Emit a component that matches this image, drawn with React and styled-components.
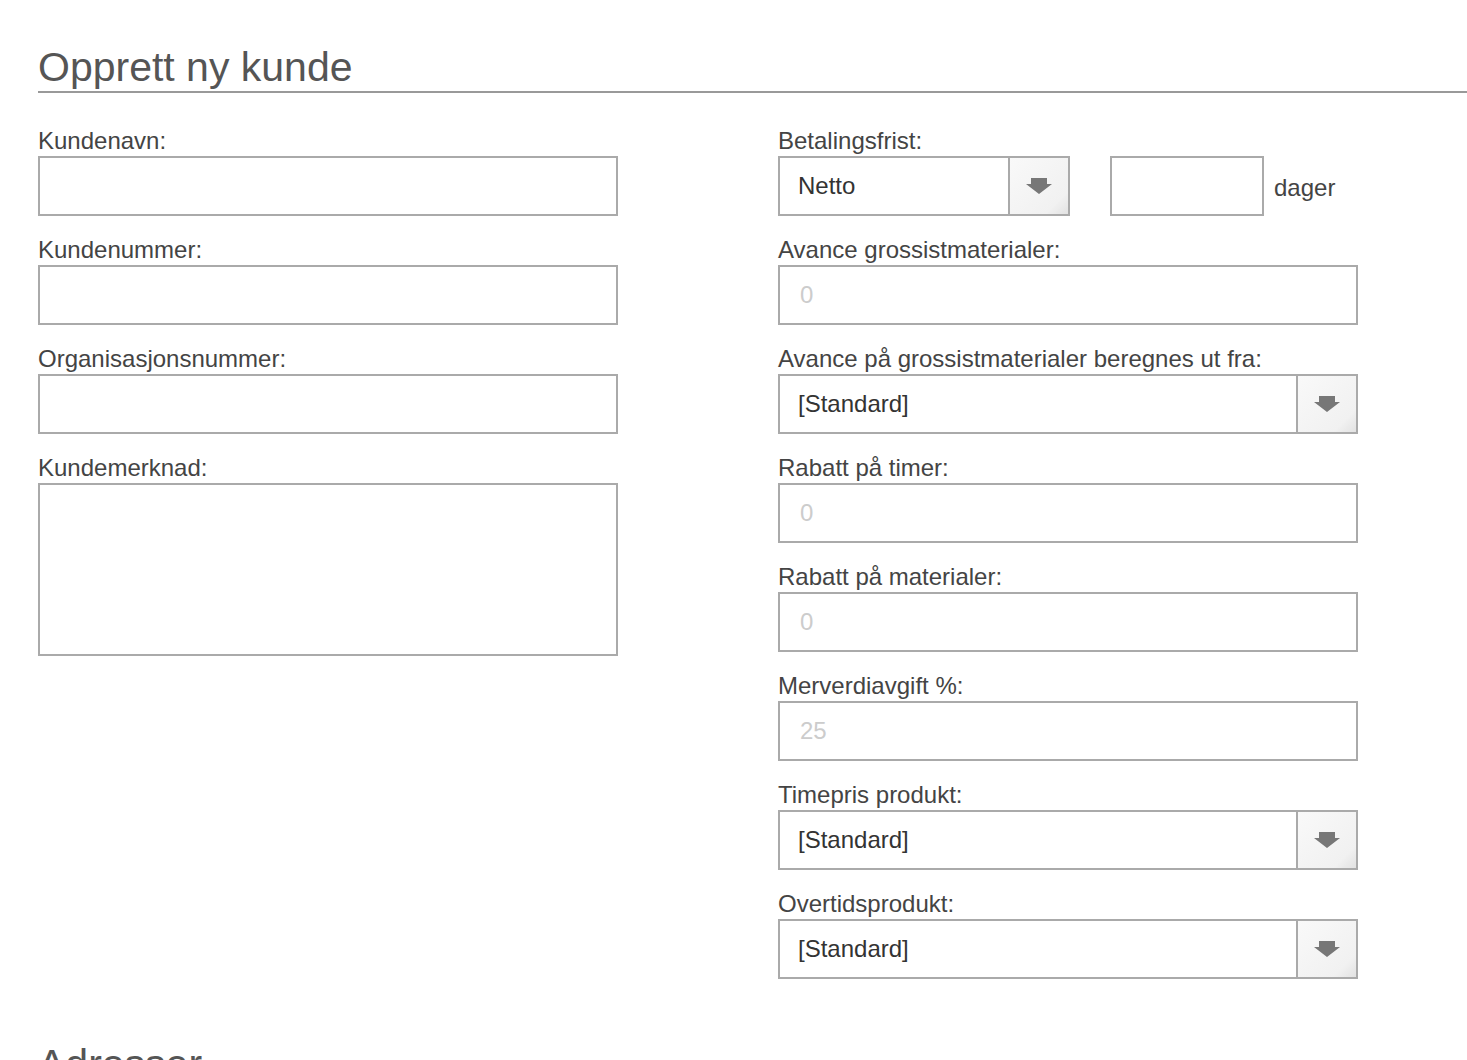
import React from "react";
import styled, { createGlobalStyle } from "styled-components";

const GlobalStyle = createGlobalStyle`
  html, body {
    margin: 0;
    padding: 0;
    background: #fff;
  }
  body {
    font-family: "Liberation Sans", Arial, sans-serif;
    color: #444;
  }
  * {
    box-sizing: border-box;
  }
`;

const Page = styled.div`
  padding: 44px 0 0 38px;
  height: 1060px;
  overflow: hidden;
`;

const Title = styled.h1`
  margin: 0;
  font-size: 41px;
  line-height: 47px;
  font-weight: 400;
  color: #555;
  border-bottom: 2px solid #999;
`;

const SubTitle = styled(Title)`
  margin-top: 62px;
  border-bottom: none;
`;

const Columns = styled.div`
  display: grid;
  grid-template-columns: 580px 580px;
  column-gap: 160px;
  margin-top: 34px;
`;

const Column = styled.div`
  display: flex;
  flex-direction: column;
  gap: 20px;
`;

const Field = styled.div`
  display: flex;
  flex-direction: column;
`;

const Label = styled.label`
  font-size: 24px;
  line-height: 27px;
  color: #444;
  margin-bottom: 2px;
`;

const Input = styled.input`
  width: ${(p) => p.$width || "100%"};
  height: 60px;
  border: 2px solid #aaa;
  padding: 0 20px;
  font-family: inherit;
  font-size: 24px;
  color: #333;
  background: #fff;
  outline: none;
  &::placeholder {
    color: #ccc;
  }
`;

const TextArea = styled.textarea`
  width: 100%;
  height: 173px;
  border: 2px solid #aaa;
  padding: 10px 18px;
  font-family: inherit;
  font-size: 24px;
  resize: none;
  outline: none;
`;

const SelectBox = styled.div`
  display: flex;
  width: ${(p) => p.$width || "100%"};
  height: 60px;
  border: 2px solid #aaa;
  background: #fff;
`;

const SelectValue = styled.div`
  flex: 1;
  display: flex;
  align-items: center;
  padding: 0 18px;
  font-size: 24px;
  color: #333;
`;

const SelectButton = styled.div`
  width: 60px;
  border-left: 2px solid #aaa;
  background: linear-gradient(135deg, #f9f9f9 0%, #f1f1f1 80%, #e2e2e2 100%);
  display: flex;
  align-items: center;
  justify-content: center;
  svg {
    width: 26px;
    height: 16px;
    filter: blur(0.5px);
  }
`;

const InlineRow = styled.div`
  display: flex;
  align-items: center;
`;

const DaysInput = styled(Input)`
  margin-left: 40px;
`;

const Unit = styled.span`
  margin-left: 10px;
  font-size: 24px;
  color: #444;
  padding-top: 4px;
`;

const Arrow = () => (
  <svg viewBox="0 0 26 16">
    <polygon points="5,0 21,0 21,6 26,6 13,16 0,6 5,6" fill="#777" />
  </svg>
);

const Select = ({ value, width }) => (
  <SelectBox $width={width}>
    <SelectValue>{value}</SelectValue>
    <SelectButton>
      <Arrow />
    </SelectButton>
  </SelectBox>
);

const App = () => (
  <Page>
    <GlobalStyle />
    <Title>Opprett ny kunde</Title>
    <Columns>
      <Column>
        <Field>
          <Label>Kundenavn:</Label>
          <Input />
        </Field>
        <Field>
          <Label>Kundenummer:</Label>
          <Input />
        </Field>
        <Field>
          <Label>Organisasjonsnummer:</Label>
          <Input />
        </Field>
        <Field>
          <Label>Kundemerknad:</Label>
          <TextArea />
        </Field>
      </Column>
      <Column>
        <Field>
          <Label>Betalingsfrist:</Label>
          <InlineRow>
            <Select value="Netto" width="292px" />
            <DaysInput $width="154px" />
            <Unit>dager</Unit>
          </InlineRow>
        </Field>
        <Field>
          <Label>Avance grossistmaterialer:</Label>
          <Input placeholder="0" />
        </Field>
        <Field>
          <Label>Avance på grossistmaterialer beregnes ut fra:</Label>
          <Select value="[Standard]" />
        </Field>
        <Field>
          <Label>Rabatt på timer:</Label>
          <Input placeholder="0" />
        </Field>
        <Field>
          <Label>Rabatt på materialer:</Label>
          <Input placeholder="0" />
        </Field>
        <Field>
          <Label>Merverdiavgift %:</Label>
          <Input placeholder="25" />
        </Field>
        <Field>
          <Label>Timepris produkt:</Label>
          <Select value="[Standard]" />
        </Field>
        <Field>
          <Label>Overtidsprodukt:</Label>
          <Select value="[Standard]" />
        </Field>
      </Column>
    </Columns>
    <SubTitle>Adresser</SubTitle>
  </Page>
);

export default App;
